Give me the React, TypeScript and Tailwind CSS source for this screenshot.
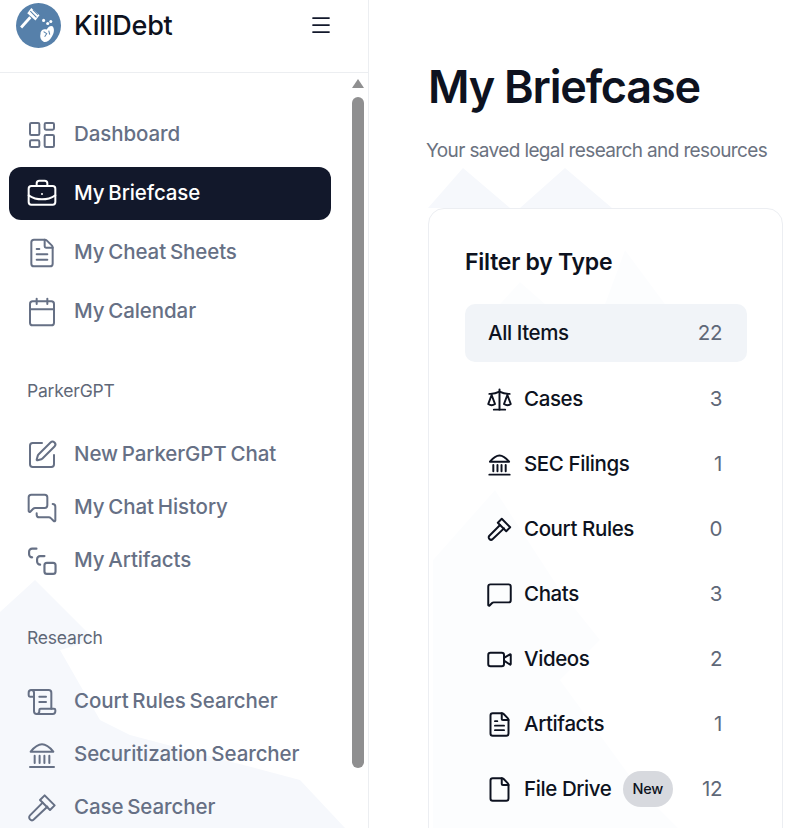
import {
  BriefcaseBusiness,
  Calendar,
  File,
  FileText,
  LayoutDashboard,
  Menu,
  MessageSquare,
  MessagesSquare,
  Scale,
  ScrollText,
  SquarePen,
  Video,
} from "lucide-react";

type IconProps = { className?: string; strokeWidth?: number };

const font = { fontFamily: '"Inter", "Noto Sans", sans-serif' };

function ArtifactIcon({ className }: IconProps) {
  return (
    <svg viewBox="0 0 26 26" fill="none" stroke="currentColor" strokeWidth="1.75" strokeLinecap="round" strokeLinejoin="round" className={className}>
      <path d="M8.500 3H5A2.500 2.500 0 0 0 2.500 5.500v2A2.500 2.500 0 0 0 5 10" />
      <path d="M15 9h-3.500A2.500 2.500 0 0 0 9 11.500v2A2.500 2.500 0 0 0 11.500 16" />
      <rect x="15" y="14.500" width="9" height="9" rx="2" />
    </svg>
  );
}

function BankIcon({ className, strokeWidth = 1.5 }: IconProps) {
  return (
    <svg viewBox="0 0 24 24" fill="none" stroke="currentColor" strokeWidth={strokeWidth} strokeLinecap="round" strokeLinejoin="round" className={className}>
      <path d="M3.500 9.500C6 6.500 9 4 12 4s6 2.500 8.500 5.500z" />
      <path d="M6.500 12.500v5.500M10.200 12.500v5.500M13.800 12.500v5.500M17.500 12.500v5.500" />
      <path d="M3 21h18" />
    </svg>
  );
}

function HammerIcon({ className, strokeWidth = 1.5 }: IconProps) {
  return (
    <svg viewBox="0 0 24 24" fill="none" stroke="currentColor" strokeWidth={strokeWidth} strokeLinecap="round" strokeLinejoin="round" className={className}>
      <path d="M14 2.500L21.500 10L18 13.500L10.500 6z" />
      <path d="M12.500 8L3 17.500a2.100 2.100 0 0 0 3 3L16 11" />
    </svg>
  );
}

function Logo() {
  return (
    <svg viewBox="0 0 44 44" className="h-[45px] w-[45px] shrink-0">
      <circle cx="22" cy="22" r="22" fill="#5680aa" />
      <g fill="#fff">
        <path d="M15 5L23 12L19 17L11 10z" />
        <path d="M13 13L15 15L6 25L4 23z" />
        <circle cx="27" cy="17" r="1.500" />
        <circle cx="31" cy="20" r="1.500" />
        <circle cx="34" cy="18" r="1.500" />
        <path d="M24 30C24 26 28 25 30 26C32 22 35 22 36 23C38 26 37 30 35 33C33 37 29 39 27 38C24 36 23 33 24 30z" />
      </g>
      <path d="M14 8l6 6M16.500 6.500l5 5M27 28l3 2-2 3M32 27l1 4" stroke="#5680aa" strokeWidth="1" fill="none" />
    </svg>
  );
}

function NavItem({ icon: Icon, label, active }: { icon: React.ElementType; label: string; active?: boolean }) {
  return (
    <a
      className={
        active
          ? "flex h-[53px] items-center gap-[16px] rounded-xl bg-[#12182b] pl-[17px] text-[20.500px] font-medium tracking-[-0.1px] [word-spacing:-1.5px] text-white"
          : "flex h-[53px] items-center gap-[16px] pl-[17px] text-[20.500px] font-medium tracking-[-0.1px] [word-spacing:-1.5px] text-[#667085]"
      }
    >
      <Icon className="h-[32px] w-[32px] shrink-0" strokeWidth={1.5} />
      <span>{label}</span>
    </a>
  );
}

const filters = [
  { icon: Scale, label: "Cases", count: 3 },
  { icon: BankIcon, label: "SEC Filings", count: 1 },
  { icon: HammerIcon, label: "Court Rules", count: 0 },
  { icon: MessageSquare, label: "Chats", count: 3 },
  { icon: Video, label: "Videos", count: 2 },
  { icon: FileText, label: "Artifacts", count: 1 },
  { icon: File, label: "File Drive", count: 12, badge: "New" },
];

export default function App() {
  return (
    <div className="relative flex h-[828px] w-[790px] overflow-hidden bg-white" style={font}>
      {/* faint mountains behind the page */}
      <svg viewBox="0 0 790 828" className="absolute inset-0 h-full w-full" fill="#f6f8fc">
        <path d="M0 612L35 580L95 640L60 650L100 720L130 735L300 780L345 828H0z" />
        <path d="M428 208L463 168L510 208zM520 208L565 168L612 208z" />
        <path d="M433 830V560L495 490L560 590L600 640L560 680L640 790L680 830z" />
        <path d="M500 304L520 282L545 304zM605 304L625 250L665 304z" />
      </svg>

      <aside className="relative flex h-full w-[369px] shrink-0 flex-col border-r border-[#eceef1]">
        <header className="flex h-[73px] shrink-0 items-start border-b border-[#eceef1] bg-white pl-[16px] pr-[35px] pt-[3px]">
          <Logo />
          <span className="ml-[13px] mt-[3px] text-[27px] font-medium tracking-[-0.25px] text-[#0d1220]">KillDebt</span>
          <Menu className="ml-auto mt-[10px] h-[24px] w-[24px] text-[#12182b]" strokeWidth={1.75} />
        </header>

        <div className="flex min-h-0 flex-1">
          <nav className="w-[331px] shrink-0 pl-[9px] pt-[35px]">
            <div className="flex flex-col gap-[6px]">
              <NavItem icon={LayoutDashboard} label="Dashboard" />
              <NavItem icon={BriefcaseBusiness} label="My Briefcase" active />
              <NavItem icon={FileText} label="My Cheat Sheets" />
              <NavItem icon={Calendar} label="My Calendar" />
            </div>
            <p className="mb-[25px] ml-[18px] mt-[41px] text-[17.500px] leading-[24px] tracking-[-0.2px] text-[#5f6878]">ParkerGPT</p>
            <div className="flex flex-col">
              <NavItem icon={SquarePen} label="New ParkerGPT Chat" />
              <NavItem icon={MessagesSquare} label="My Chat History" />
              <NavItem icon={ArtifactIcon} label="My Artifacts" />
            </div>
            <p className="mb-[25px] ml-[18px] mt-[39px] text-[17.500px] leading-[24px] tracking-[-0.2px] text-[#5f6878]">Research</p>
            <div className="flex flex-col">
              <NavItem icon={ScrollText} label="Court Rules Searcher" />
              <NavItem icon={BankIcon} label="Securitization Searcher" />
              <NavItem icon={HammerIcon} label="Case Searcher" />
            </div>
          </nav>

          <div className="ml-[21px] flex w-[12px] flex-col items-center pt-[6px]">
            <div className="h-0 w-0 border-x-[6px] border-b-[9px] border-x-transparent border-b-[#8f8f90]" />
            <div className="mt-[9px] h-[671px] w-[12px] rounded-full bg-[#8f8f90]" />
          </div>
        </div>
      </aside>

      <main className="relative min-w-0 flex-1 pl-[59px] pr-[7px] pt-[58px]">
        <h1 className="text-[45px] font-semibold leading-[58px] tracking-[-1.2px] text-[#0d1220]">My Briefcase</h1>
        <p className="-ml-[2px] mt-[21px] whitespace-nowrap text-[19px] leading-[28px] tracking-[-0.63px] text-[#6b7280]">
          Your saved legal research and resources
        </p>
        <section className="mt-[43px] h-[700px] rounded-2xl border border-[#eceef2] bg-white/70 pl-[36px] pr-[35px] pt-[35px]">
          <h2 className="text-[23px] font-semibold leading-[36px] tracking-[-0.25px] text-[#0d1220]">Filter by Type</h2>
          <ul className="mt-[24px] flex flex-col gap-[7px]">
            <li className="mb-[1px] flex h-[58px] items-center justify-between rounded-[10px] bg-[#f1f4f8] pl-[23px] pr-[25px] text-[20.500px] font-medium tracking-[-0.4px] text-[#0d1220]">
              <span>All Items</span>
              <span className="font-normal text-[#5f6878]">22</span>
            </li>
            {filters.map((f) => (
              <li key={f.label} className="flex h-[58px] items-center pl-[21px] pr-[25px] text-[20.500px] font-medium tracking-[-0.4px] text-[#0d1220]">
                <f.icon className="h-[27px] w-[27px] shrink-0" strokeWidth={1.75} />
                <span className="ml-[11px]">{f.label}</span>
                {f.badge && (
                  <span className="ml-[11px] rounded-full bg-[#d7d9de] px-[10px] py-[8px] text-[14.500px] leading-[20px] tracking-[-0.2px]">
                    {f.badge}
                  </span>
                )}
                <span className="ml-auto font-normal text-[#5f6878]">{f.count}</span>
              </li>
            ))}
          </ul>
        </section>
      </main>
    </div>
  );
}
